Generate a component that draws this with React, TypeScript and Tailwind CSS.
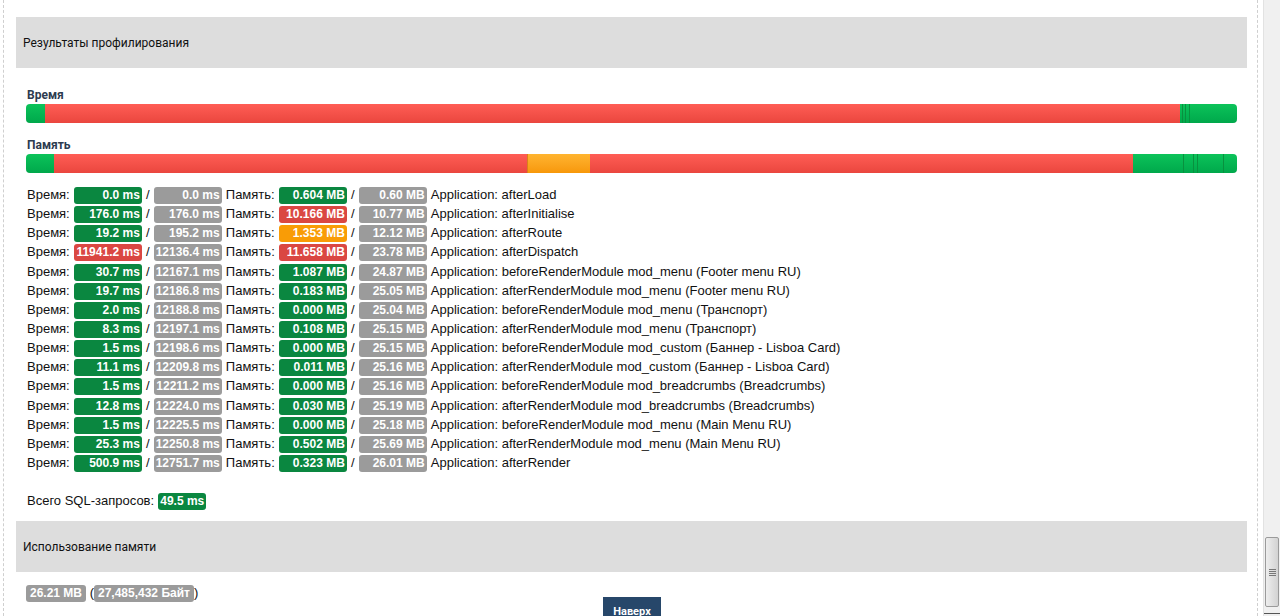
type Tone = "g" | "r" | "o" | "n";

const badgeTone: Record<Tone, string> = {
  g: "bg-[#0a8740]",
  r: "bg-[#da4742]",
  o: "bg-[#f99c06]",
  n: "bg-[#9b9b9b]",
};

const segTone: Record<"g" | "r" | "o", string> = {
  g: "from-[#0cc35a] to-[#00a84b]",
  r: "from-[#ff5d55] to-[#ea463e]",
  o: "from-[#ffb42e] to-[#f79808]",
};

const segLine: Record<"g" | "r" | "o", string> = {
  g: "border-l border-[#08913f]",
  r: "border-l border-[#c7302a]",
  o: "border-l border-[#d9811a]",
};

type Seg = [number, "g" | "r" | "o"];

const timeBar: Seg[] = [
  [19, "g"],
  [1135, "r"],
  [2, "g"],
  [3, "g"],
  [4, "g"],
  [48, "g"],
];

const memBar: Seg[] = [
  [28, "g"],
  [473, "r"],
  [63, "o"],
  [543, "r"],
  [50, "g"],
  [10, "g"],
  [4, "g"],
  [26, "g"],
  [14, "g"],
];

type Row = [string, Tone, string, string, Tone, string, string];

const rows: Row[] = [
  ["0.0 ms", "g", "0.0 ms", "0.604 MB", "g", "0.60 MB", "afterLoad"],
  ["176.0 ms", "g", "176.0 ms", "10.166 MB", "r", "10.77 MB", "afterInitialise"],
  ["19.2 ms", "g", "195.2 ms", "1.353 MB", "o", "12.12 MB", "afterRoute"],
  ["11941.2 ms", "r", "12136.4 ms", "11.658 MB", "r", "23.78 MB", "afterDispatch"],
  ["30.7 ms", "g", "12167.1 ms", "1.087 MB", "g", "24.87 MB", "beforeRenderModule mod_menu (Footer menu RU)"],
  ["19.7 ms", "g", "12186.8 ms", "0.183 MB", "g", "25.05 MB", "afterRenderModule mod_menu (Footer menu RU)"],
  ["2.0 ms", "g", "12188.8 ms", "0.000 MB", "g", "25.04 MB", "beforeRenderModule mod_menu (Транспорт)"],
  ["8.3 ms", "g", "12197.1 ms", "0.108 MB", "g", "25.15 MB", "afterRenderModule mod_menu (Транспорт)"],
  ["1.5 ms", "g", "12198.6 ms", "0.000 MB", "g", "25.15 MB", "beforeRenderModule mod_custom (Баннер - Lisboa Card)"],
  ["11.1 ms", "g", "12209.8 ms", "0.011 MB", "g", "25.16 MB", "afterRenderModule mod_custom (Баннер - Lisboa Card)"],
  ["1.5 ms", "g", "12211.2 ms", "0.000 MB", "g", "25.16 MB", "beforeRenderModule mod_breadcrumbs (Breadcrumbs)"],
  ["12.8 ms", "g", "12224.0 ms", "0.030 MB", "g", "25.19 MB", "afterRenderModule mod_breadcrumbs (Breadcrumbs)"],
  ["1.5 ms", "g", "12225.5 ms", "0.000 MB", "g", "25.18 MB", "beforeRenderModule mod_menu (Main Menu RU)"],
  ["25.3 ms", "g", "12250.8 ms", "0.502 MB", "g", "25.69 MB", "afterRenderModule mod_menu (Main Menu RU)"],
  ["500.9 ms", "g", "12751.7 ms", "0.323 MB", "g", "26.01 MB", "afterRender"],
];

function Badge({ tone, children, wide = true }: { tone: Tone; children: string; wide?: boolean }) {
  return (
    <span
      className={`inline-block align-middle mx-[0.5px] px-[2px] h-[17px] leading-[17px] rounded-[3px] text-[12px] font-bold text-white text-right ${
        wide ? "min-w-[68px]" : ""
      } ${badgeTone[tone]}`}
    >
      {children}
    </span>
  );
}

function Bar({ segs }: { segs: Seg[] }) {
  return (
    <div className="flex h-[19px] w-[1211px] rounded-[4px] overflow-hidden shadow-[inset_0_-1px_0_rgba(0,0,0,0.12)]">
      {segs.map(([w, c], i) => {
        const line = i > 0 && (segs[i - 1][1] === c || c === "o") ? segLine[c] : "";
        return (
          <div
            key={i}
            className={`h-full shrink-0 bg-linear-to-b ${segTone[c]} ${line}`}
            style={{ width: w }}
          />
        );
      })}
    </div>
  );
}

function SectionHead({ title }: { title: string }) {
  return (
    <div className="h-[51px] bg-[#dddddd] flex items-center pl-[7px] text-[12px] text-[#111] font-['Roboto','Open_Sans',sans-serif]">
      {title}
    </div>
  );
}

export default function App() {
  return (
    <div className="relative w-[1280px] h-[616px] overflow-hidden bg-white flex font-['Liberation_Sans',Arial,sans-serif] text-[13px] text-[#111]">
      <div className="ml-[3px] w-[1255px] h-full border-x border-dashed border-[#cfcfcf] pl-[12px] pr-[10px] pt-[17px]">
        <SectionHead title="Результаты профилирования" />

        <div className="pl-[10px]">
          <div className="mt-[18px] h-[18px] leading-[18px] pl-[1px] text-[12px] font-bold text-[#2d3b4f] font-['Roboto',sans-serif]">
            Время
          </div>
          <Bar segs={timeBar} />
          <div className="mt-[13px] h-[18px] leading-[18px] pl-[1px] text-[12px] font-bold text-[#2d3b4f] font-['Roboto',sans-serif]">
            Память
          </div>
          <Bar segs={memBar} />

          <div className="mt-[12px] pl-[1px]">
            {rows.map((r, i) => (
              <div key={i} className="h-[19.15px] leading-[19px] whitespace-nowrap">
                {"Время: "}
                <Badge tone={r[1]}>{r[0]}</Badge>
                {" / "}
                <Badge tone="n">{r[2]}</Badge>
                {" Память: "}
                <Badge tone={r[4]}>{r[3]}</Badge>
                {" / "}
                <Badge tone="n">{r[5]}</Badge>
                {" Application: " + r[6]}
              </div>
            ))}
          </div>

          <div className="mt-[19px] h-[19px] leading-[19px] pl-[1px] whitespace-nowrap">
            {"Всего SQL-запросов: "}
            <Badge tone="g" wide={false}>
              49.5 ms
            </Badge>
          </div>
        </div>

        <div className="mt-[11px]">
          <SectionHead title="Использование памяти" />
        </div>

        <div className="mt-[11px] h-[19px] leading-[19px] pl-[10px] whitespace-nowrap">
          <span className="inline-block align-middle px-[4px] h-[17px] leading-[17px] rounded-[3px] text-[12px] font-bold text-white bg-[#9b9b9b]">
            26.21 MB
          </span>
          {" ("}
          <span className="inline-block align-middle px-[4px] h-[17px] leading-[17px] rounded-[3px] text-[12px] font-bold text-white bg-[#9b9b9b]">
            27,485,432 Байт
          </span>
          {")"}
        </div>

        <div className="mt-[21px] h-[20px] bg-[#dddddd]" />
      </div>

      <div className="ml-[5px] w-[17px] h-full bg-[#f0f0f0] border-l border-[#e2e2e2] flex flex-col justify-end">
        <div className="mx-[1px] h-[70px] rounded-[2px] border border-[#9a9a9a] bg-linear-to-r from-[#eeeeee] to-[#d2d2d2] flex flex-col items-center justify-center gap-[1px]">
          <div className="w-[7px] h-[1px] bg-[#777]" />
          <div className="w-[7px] h-[1px] bg-[#777]" />
          <div className="w-[7px] h-[1px] bg-[#777]" />
          <div className="w-[7px] h-[1px] bg-[#777]" />
        </div>
        <div className="h-[6px]" />
        <div className="h-[1px] bg-[#555]" />
        <div className="h-[2px]" />
      </div>

      <div className="absolute left-[603px] top-[597px] w-[58px] h-[24px] bg-[#27476a] text-white text-[11px] font-bold text-center pt-[8px] leading-[13px] font-['Roboto',sans-serif]">
        Наверх
      </div>
    </div>
  );
}
